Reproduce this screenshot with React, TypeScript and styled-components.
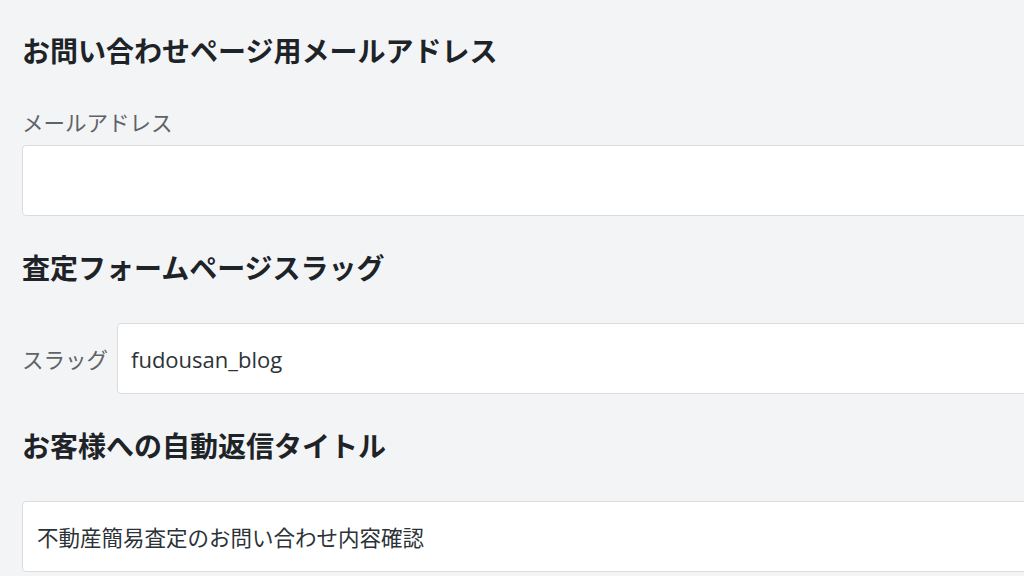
import React from "react";
import styled, { createGlobalStyle } from "styled-components";

const Global = createGlobalStyle`
  html, body { margin: 0; padding: 0; background: #f3f4f6; }
  body { font-family: "Noto Sans CJK JP", "Noto Sans", sans-serif; overflow: hidden; }
`;

const Page = styled.div`
  width: 1024px;
  height: 576px;
  box-sizing: border-box;
  padding: 30px 0 0 22px;
  background: #f3f4f6;
  overflow: hidden;
`;

const Section = styled.section<{ $gap: number }>`
  display: flex;
  flex-direction: column;
  gap: ${(p) => p.$gap}px;
  margin-bottom: 31px;
`;

const Heading = styled.h2`
  margin: 0;
  font-size: 28px;
  line-height: 40px;
  font-weight: 700;
  color: #1d2327;
  white-space: nowrap;
`;

const Field = styled.div`
  display: flex;
  flex-direction: column;
  gap: 8px;
`;

const Label = styled.label`
  font-size: 21.5px;
  line-height: 30px;
  color: #5f6368;
  white-space: nowrap;
`;

const Row = styled.div`
  display: flex;
  align-items: center;
  gap: 9px;
`;

const Input = styled.input<{ $latin?: boolean }>`
  box-sizing: border-box;
  width: 1040px;
  flex: none;
  height: 71px;
  border: 1px solid #dcdcde;
  border-radius: 4px;
  background: #fff;
  padding: 0 ${(p) => (p.$latin ? "13px" : "14px")};
  font-family: ${(p) =>
    p.$latin ? `"Open Sans", "Noto Sans CJK JP", sans-serif` : `"Noto Sans CJK JP", sans-serif`};
  font-size: ${(p) => (p.$latin ? "22px" : "21.5px")};
  color: #2c3338;
  outline: none;
`;

export default function App() {
  return (
    <>
      <Global />
      <Page>
        <Section $gap={37}>
          <Heading>お問い合わせページ用メールアドレス</Heading>
          <Field>
            <Label>メールアドレス</Label>
            <Input type="text" defaultValue="" />
          </Field>
        </Section>
        <Section $gap={36}>
          <Heading>査定フォームページスラッグ</Heading>
          <Row>
            <Label>スラッグ</Label>
            <Input type="text" defaultValue="fudousan_blog" $latin />
          </Row>
        </Section>
        <Section $gap={36}>
          <Heading>お客様への自動返信タイトル</Heading>
          <Input type="text" defaultValue="不動産簡易査定のお問い合わせ内容確認" />
        </Section>
      </Page>
    </>
  );
}
